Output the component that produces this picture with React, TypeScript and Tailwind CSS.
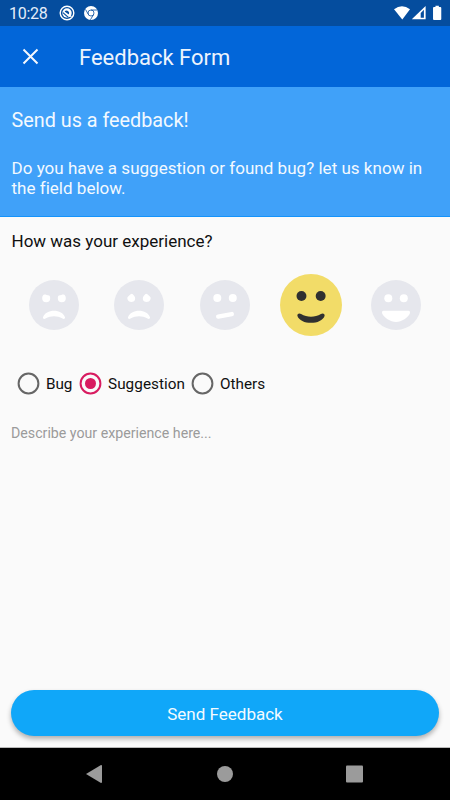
import { useState } from 'react';
import type { ReactNode } from 'react';

const FACES: { label: string; art: ReactNode }[] = [
  {
    label: 'Terrible',
    art: (
      <>
        <path d="M15.6 14.6 C17 14.6 18.3 15.3 20.2 15.5 C21 16.2 21.2 17.2 21.2 18.2 A4 4 0 0 1 13.2 18.2 C13.2 16.4 14 14.6 15.6 14.6Z" />
        <path d="M34.4 14.6 C33 14.6 31.7 15.3 29.8 15.5 C29 16.2 28.8 17.2 28.8 18.2 A4 4 0 0 0 36.8 18.2 C36.8 16.4 36 14.6 34.4 14.6Z" />
        <path d="M14 37.2 C15.5 33 20 30.8 25 30.8 S34.5 33 36 37.2 C36.3 38.8 34.8 39.3 33.5 38.6 C28 35.5 22 35.5 16.5 38.6 C15.2 39.3 13.7 38.8 14 37.2Z" />
      </>
    ),
  },
  {
    label: 'Bad',
    art: (
      <>
        <path d="M16.6 14.3 Q18 13.4 19 14.4 L20.3 16 C22.3 19 20.5 22 17.5 22 C15.6 22 14.5 21.2 13.8 20 C13 18 13.2 17.2 14.4 16.2Z" />
        <path d="M33.4 14.3 Q32 13.4 31 14.4 L29.7 16 C27.7 19 29.5 22 32.5 22 C34.4 22 35.5 21.2 36.2 20 C37 18 36.8 17.2 35.6 16.2Z" />
        <path d="M14 37.2 C15.5 33 20 30.8 25 30.8 S34.5 33 36 37.2 C36.3 38.8 34.8 39.3 33.5 38.6 C28 35.5 22 35.5 16.5 38.6 C15.2 39.3 13.7 38.8 14 37.2Z" />
      </>
    ),
  },
  {
    label: 'Okay',
    art: (
      <>
        <circle cx="17.3" cy="18" r="4" />
        <circle cx="32.8" cy="18" r="4" />
        <path d="M18.2 36.6 L31.8 34.1" fill="none" stroke="currentColor" strokeWidth="4.4" strokeLinecap="round" />
      </>
    ),
  },
  {
    label: 'Good',
    art: (
      <>
        <circle cx="17.3" cy="17.7" r="4" />
        <circle cx="32.8" cy="17.7" r="4" />
        <path d="M14 33.6 C14 32 15.5 31.4 17 32.3 C22 35.3 28 35.3 33 32.3 C34.5 31.4 36 32 36 33.6 C34.8 37.4 30 39.4 25 39.4 S15.2 37.4 14 33.6Z" />
      </>
    ),
  },
  {
    label: 'Great',
    art: (
      <>
        <circle cx="17.3" cy="18.2" r="4" />
        <circle cx="32.8" cy="18.2" r="4" />
        <path d="M12.5 30.8 H37.5 Q39.3 30.9 39 33 C37.5 37.5 30.5 42 25 42 S12.5 37.5 11 33 Q10.7 30.9 12.5 30.8Z" />
      </>
    ),
  },
];

const TOPICS = [
  { name: 'Bug', style: 'w-[62px]', text: 'tracking-[-0.1px]' },
  { name: 'Suggestion', style: 'w-[112px]', text: 'tracking-[0.05px]' },
  { name: 'Others', style: 'w-[80px]', text: '' },
];

function StatusBar() {
  return (
    <div className="flex h-[26px] items-center bg-[#054d9e] pl-[9px] text-white">
      <span className="mt-[2px] w-[50px] whitespace-nowrap text-[16px] leading-none tracking-[-0.3px] text-[#e4edfa]">10:28</span>
      <svg className="h-4 w-4" viewBox="0 0 16 16">
        <circle cx="8" cy="8" r="6.8" fill="none" stroke="currentColor" strokeWidth="1.4" />
        <circle cx="8" cy="8" r="4.7" fill="currentColor" />
        <path d="M5.6 6.4 A2.6 2.6 0 0 1 9.8 9.4Z" fill="#054d9e" />
        <path d="M3.9 7.6 L9.3 12.4" stroke="#054d9e" strokeWidth="1.2" />
        <path d="M9.8 9.4 L12.4 11.8" stroke="currentColor" strokeWidth="1.3" />
      </svg>
      <svg className="ml-2 h-4 w-4" viewBox="0 0 16 16">
        <circle cx="8" cy="8" r="7" fill="currentColor" />
        <circle cx="8" cy="8" r="3" fill="none" stroke="#054d9e" strokeWidth="0.8" />
        <path d="M8 5 H14.2 M5.4 9.5 L2.5 4.4 M10.6 9.5 L7.4 14.8" stroke="#054d9e" strokeWidth="0.8" />
      </svg>
      <svg className="ml-auto mr-[7px] h-4 w-[49px]" viewBox="0 0 49 16">
        <path d="M0 4.2 Q8 -1.6 16 4.2 L8.3 14.4Z" fill="currentColor" />
        <path d="M31.6 1 V14.3 H17.8Z" fill="currentColor" />
        <path d="M26.7 8 L29.9 4.8 V12.7 H26.7Z" fill="#054d9e" />
        <path d="M41.5 0.8 H45 V2 H46.5 Q47.5 2 47.5 3 V14 Q47.5 15 46.5 15 H40 Q39 15 39 14 V3 Q39 2 40 2 H41.5Z" transform="translate(1.2 0) scale(0.97 1)" fill="currentColor" />
      </svg>
    </div>
  );
}

export default function App() {
  const [rating, setRating] = useState(3);
  const [topic, setTopic] = useState('Suggestion');

  return (
    <div className="flex h-[800px] w-[450px] flex-col overflow-hidden bg-[#fafafa] font-['Roboto',sans-serif] text-[#101010]">
      <StatusBar />
      <header className="flex h-[61px] items-center bg-[#0266d9] pl-[22px] text-white">
        <button aria-label="Close" className="mr-[40px]">
          <svg className="h-[17px] w-[17px]" viewBox="0 0 17 17">
            <path d="M1.5 1.5 L15.5 15.5 M15.5 1.5 L1.5 15.5" stroke="#f4f7fd" strokeWidth="2" />
          </svg>
        </button>
        <h1 className="mt-[3px] whitespace-nowrap text-[22px] leading-none text-[#edf4fd]">Feedback Form</h1>
      </header>

      <section className="h-[130px] border-b border-[#1493fb] bg-[#40a1f9] pl-[11.5px] pt-[22px] text-[#f3f9ff]">
        <h2 className="text-[19.8px] leading-6">Send us a feedback!</h2>
        <p className="mt-[25px] whitespace-nowrap text-[17px] leading-5 tracking-[0.02px]">
          Do you have a suggestion or found bug? let us know in
          <br />
          the field below.
        </p>
      </section>

      <main className="flex flex-1 flex-col">
        <h3 className="pl-[11.5px] pt-[14px] text-[17px] leading-5">How was your experience?</h3>
        <div className="mt-[22px] flex h-[64px] items-center justify-between px-[11px]">
          {FACES.map((face, i) => (
            <button
              key={face.label}
              aria-label={face.label}
              onClick={() => setRating(i)}
              className={`flex w-[86px] justify-center ${i === rating ? 'text-[#303030]' : 'text-white'}`}
            >
              <svg className={i === rating ? 'h-[62px] w-[62px]' : 'h-[50px] w-[50px]'} viewBox="0 0 50 50">
                <circle cx="25" cy="25" r="25" fill={i === rating ? '#f2dc68' : '#e6e7ed'} />
                <g fill="currentColor">{face.art}</g>
              </svg>
            </button>
          ))}
        </div>

        <div className="mt-[35px] flex h-[23px] pl-[17px]">
          {TOPICS.map(({ name, style, text }) => (
            <button key={name} onClick={() => setTopic(name)} className={`flex items-center gap-[6px] ${style}`}>
              <svg className="h-[23px] w-[23px] shrink-0" viewBox="0 0 23 23">
                <circle cx="11.5" cy="11.5" r="9.9" fill="none" stroke={name === topic ? '#d81b60' : '#666666'} strokeWidth="2" />
                {name === topic && <circle cx="11.5" cy="11.5" r="5.5" fill="#d81b60" />}
              </svg>
              <span className={`mt-[2px] text-[15.3px] leading-none ${text}`}>{name}</span>
            </button>
          ))}
        </div>

        <textarea
          placeholder="Describe your experience here..."
          className="ml-[11px] mt-[28px] w-[428px] flex-1 resize-none text-[14.2px] leading-5 outline-none placeholder:text-[#9b9b9b]"
        />
        <button className="mx-[11px] mb-[11px] mt-4 h-[46px] shrink-0 rounded-full bg-[#10a7f9] pt-[3px] text-[17px] text-[#f4fbff] shadow-[0_3px_5px_rgba(0,0,0,0.3)]">
          Send Feedback
        </button>
      </main>

      <nav className="flex h-[53px] items-center justify-center border-t border-[#b9b9b9] bg-black">
        <svg className="h-[20px] w-[280px] text-[#9b9b9b]" viewBox="0 0 280 20" fill="currentColor">
          <path d="M1 10 L16 1 Q17 0.8 17 2 V18 Q17 19 16 19Z" />
          <circle cx="140" cy="10" r="8" />
          <rect x="261" y="1.5" width="17" height="17" rx="1" />
        </svg>
      </nav>
    </div>
  );
}
